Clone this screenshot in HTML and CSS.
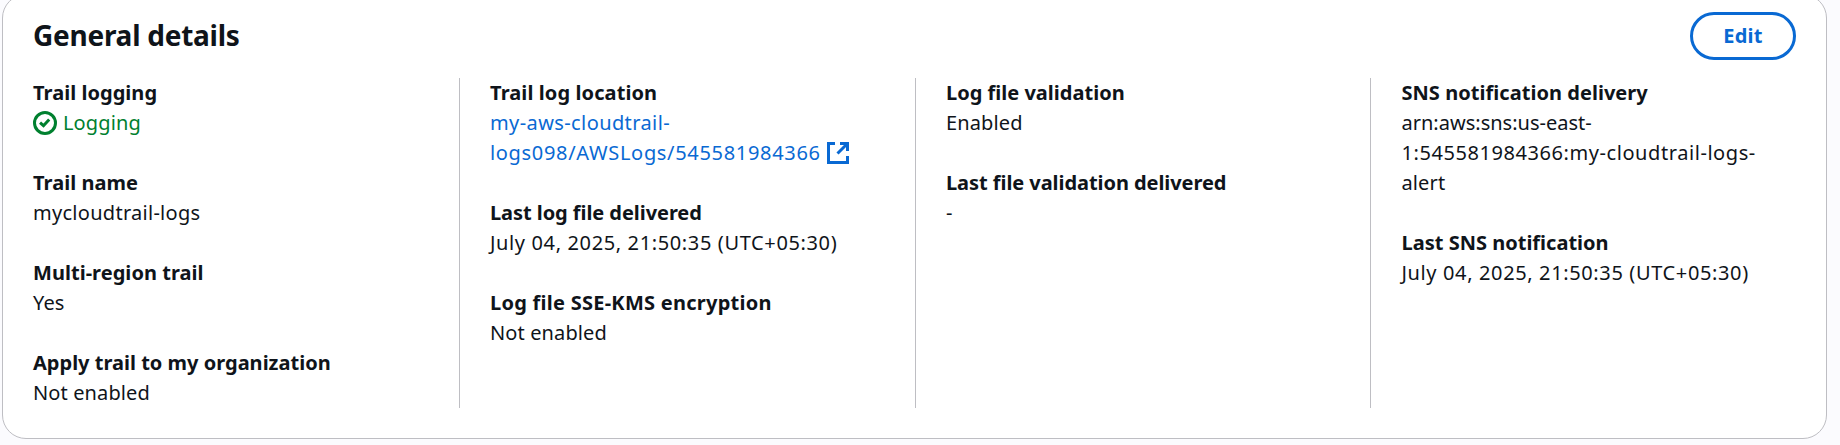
FILE: index.html
```html
<!DOCTYPE html>
<html lang="en">
<head>
<meta charset="utf-8">
<title>General details</title>
<link rel="stylesheet" href="styles.css">
</head>
<body>
<section class="card">
  <header class="card-header">
    <h2 class="title">General details</h2>
    <button class="edit" type="button">Edit</button>
  </header>
  <div class="columns">
    <dl class="column">
      <div class="pair"><dt>Trail logging</dt><dd class="status"><svg class="status-icon" viewBox="0 0 16 16"><circle cx="8" cy="8" r="7"/><path d="m4.700 7.700 2.300 2.100 3.800-4.200"/></svg><span>Logging</span></dd></div>
      <div class="pair"><dt>Trail name</dt><dd class="name">mycloudtrail-logs</dd></div>
      <div class="pair"><dt>Multi-region trail</dt><dd>Yes</dd></div>
      <div class="pair"><dt class="plain">Apply trail to my organization</dt><dd>Not enabled</dd></div>
    </dl>
    <dl class="column">
      <div class="pair"><dt class="location-label">Trail log location</dt><dd><a class="link"><span class="bucket">my-aws-cloudtrail-</span><br><span class="prefix">logs098/AWSLogs/545581984366</span><svg class="external-icon" viewBox="0 0 22 22"><path d="M8 1.500H1.500v19h19V14M13 1.500h7.500V9M20 2 10.500 11.500"/></svg></a></dd></div>
      <div class="pair"><dt class="tight">Last log file delivered</dt><dd class="date">July 04, 2025, 21:50:35 (UTC+05:30)</dd></div>
      <div class="pair"><dt class="encryption-label">Log file SSE-KMS encryption</dt><dd>Not enabled</dd></div>
    </dl>
    <dl class="column">
      <div class="pair"><dt class="plain">Log file validation</dt><dd>Enabled</dd></div>
      <div class="pair"><dt class="tight">Last file validation delivered</dt><dd>-</dd></div>
    </dl>
    <dl class="column">
      <div class="pair"><dt>SNS notification delivery</dt><dd><span class="arn-region">arn:aws:sns:us-east-</span><br><span class="arn-topic">1:545581984366:my-cloudtrail-logs-</span><br>alert</dd></div>
      <div class="pair"><dt class="plain">Last SNS notification</dt><dd class="date">July 04, 2025, 21:50:35 (UTC+05:30)</dd></div>
    </dl>
  </div>
</section>
</body>
</html>
```
FILE: styles.css
```css
* { box-sizing: border-box; }
html, body { margin: 0; height: 445px; overflow: hidden; }
body {
  background: #fbfbfe;
  color: #0f141a;
  font: 400 20px/30px "Noto Sans", "Open Sans", sans-serif;
}
.card {
  width: 1825px;
  height: 445px;
  margin: -6px 0 0 2px;
  padding: 17px 30px 0 30px;
  background: #fff;
  border: 1px solid #bebec3;
  border-radius: 24px;
}
.card-header {
  display: flex;
  align-items: center;
  justify-content: space-between;
  height: 48px;
}
.title {
  margin: 0;
  padding-bottom: 2px;
  font-size: 28px;
  line-height: 36px;
  font-weight: 700;
  letter-spacing: -0.25px;
}
.edit {
  width: 106px;
  height: 48px;
  padding: 0;
  border: 3px solid #0969d3;
  border-radius: 24px;
  background: #fff;
  color: #0969d3;
  font: 700 20px/30px "Noto Sans", "Open Sans", sans-serif;
  letter-spacing: 0.2px;
}
.columns {
  display: grid;
  grid-template-columns: 426px 456px 455px 425px;
  height: 330px;
  margin-top: 18px;
}
.column {
  display: flex;
  flex-direction: column;
  gap: 30px;
  margin: 0;
  white-space: nowrap;
}
.column + .column { padding-left: 30px; border-left: 1px solid #bebec3; }
.column:last-child { padding-left: 30.5px; }
dt { font-weight: 700; letter-spacing: 0.04px; }
dt.plain { letter-spacing: 0.01px; }
dt.tight { letter-spacing: -0.06px; }
dt.location-label { letter-spacing: 0.1px; }
dt.encryption-label { letter-spacing: 0.26px; }
dd { margin: 0; letter-spacing: 0.12px; }
.name { letter-spacing: 0.28px; }
.bucket { letter-spacing: 0.4px; }
.prefix { letter-spacing: 0.68px; }
.date { letter-spacing: 0.63px; }
.arn-region { letter-spacing: 0.01px; }
.arn-topic { letter-spacing: 0.57px; }
.status { display: flex; align-items: center; gap: 6px; color: #00802f; }
.status-icon { width: 24px; height: 24px; fill: none; stroke: currentColor; stroke-width: 2; }
.link { color: #0969d3; }
.external-icon {
  width: 22px;
  height: 22px;
  margin-left: 6.5px;
  vertical-align: -4px;
  fill: none;
  stroke: currentColor;
  stroke-width: 3;
}
```
